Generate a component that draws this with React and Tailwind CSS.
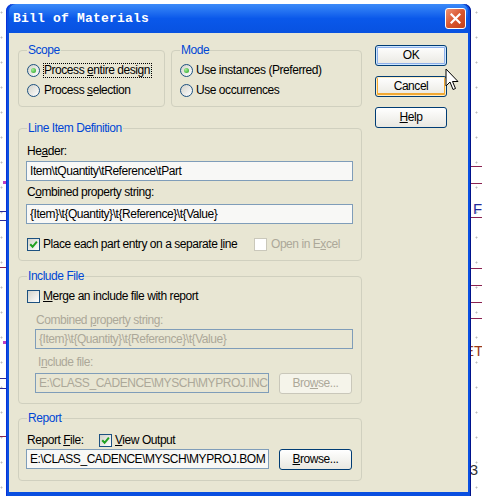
import React from "react";

function Radio({ checked }) {
  return (
    <span className="flex h-[13px] w-[13px] shrink-0 items-center justify-center rounded-full border border-[#1C5180] bg-gradient-to-br from-[#D2D2CA] to-white">
      {checked && (
        <span className="h-[5px] w-[5px] rounded-full bg-[radial-gradient(circle_at_35%_35%,#A4EE96,#1FA01F)]" />
      )}
    </span>
  );
}

function Check({ checked, disabled }) {
  return (
    <span
      className={`flex h-[13px] w-[13px] shrink-0 items-center justify-center border ${
        disabled
          ? "border-[#CAC8BB] bg-white"
          : "border-[#1C5180] bg-gradient-to-br from-[#D2D2CA] to-white"
      }`}
    >
      {checked && (
        <svg width="9" height="9" viewBox="0 0 9 9">
          <path d="M1.2 4.2 L3.6 6.8 L7.9 1.6" fill="none" stroke="#21A121" strokeWidth="2" />
        </svg>
      )}
    </span>
  );
}

function Button({ children, kind = "normal", className = "" }) {
  const styles = {
    normal: "border-[#003C74] bg-gradient-to-b from-white to-[#E9E8E1] text-black",
    focus:
      "border-[#003C74] bg-gradient-to-b from-white to-[#E9E8E1] text-black shadow-[inset_0_0_0_1px_#CEE7FF,inset_0_0_0_2px_#8FB0EA]",
    hover:
      "border-[#003C74] bg-gradient-to-b from-white to-[#E9E8E1] text-black shadow-[inset_0_0_0_1px_#FFEDC2,inset_0_-1px_0_2px_#F2A934]",
    disabled: "border-[#C9C7BA] bg-[#F5F4EA] text-[#ACA899]",
  };
  return (
    <button
      type="button"
      className={`flex h-[21px] items-center justify-center whitespace-nowrap rounded-[3px] border leading-[15px] ${styles[kind]} ${className}`}
    >
      {children}
    </button>
  );
}

function Field({ value, disabled, className = "" }) {
  return (
    <input
      readOnly
      value={value}
      className={`block h-[20px] border border-[#7F9DB9] pl-[3px] leading-[18px] tracking-[-0.45px] outline-none ${
        disabled ? "bg-[#E8E6D3] text-[#ACA899]" : "bg-[#F8F8F6] text-black"
      } ${className}`}
    />
  );
}

function Group({ title, className = "", children }) {
  return (
    <fieldset className={`rounded-[4px] border border-[#D0D0BF] px-[8px] ${className}`}>
      <legend className="px-[1px] leading-[14px] text-[#0046D5]">{title}</legend>
      {children}
    </fieldset>
  );
}

export default function App() {
  return (
    <div className="relative h-[499px] w-[482px] overflow-hidden whitespace-nowrap bg-white bg-[radial-gradient(circle,#BDBDBD_0.8px,transparent_1.2px)] bg-[length:25px_25px] bg-[position:-11px_0px] font-['Liberation_Sans',Arial,sans-serif] text-[12px] tracking-[-0.45px] text-black">
      {/* schematic behind the dialog */}
      <div className="absolute left-[468px] top-[166px] h-px w-[14px] bg-[#8A2250]" />
      <div className="absolute left-[468px] top-[183px] h-px w-[14px] bg-[#8A2250]" />
      <div className="absolute left-[468px] top-[217px] h-px w-[14px] bg-[#8A2250]" />
      <div className="absolute left-[468px] top-[268px] h-px w-[14px] bg-[#8A2250]" />
      <div className="absolute left-[468px] top-[285px] h-px w-[14px] bg-[#8A2250]" />
      <div className="absolute left-[468px] top-[302px] h-px w-[14px] bg-[#8A2250]" />
      <div className="absolute left-[468px] top-[318px] h-px w-[14px] bg-[#8A2250]" />
      <div className="absolute left-[473px] top-[201px] text-[15px] leading-[15px] tracking-normal text-[#1F2A9A]">F</div>
      <div className="absolute left-[464px] top-[343px] text-[15px] leading-[15px] tracking-normal text-[#9A3A1A]">ET</div>
      <div className="absolute left-[467px] top-[462px] text-[15px] leading-[15px] tracking-normal text-[#333]">'3</div>
      <div className="absolute left-0 top-[211px] h-px w-[8px] bg-[#2A2A9A]" />
      <div className="absolute left-0 top-[220px] h-px w-[8px] bg-[#2A2A9A]" />
      <div className="absolute left-0 top-[267px] h-px w-[8px] bg-[#8A2250]" />
      <div className="absolute left-0 top-[378px] h-px w-[8px] bg-[#2A2A9A]" />
      <div className="absolute left-0 top-[388px] h-px w-[8px] bg-[#2A2A9A]" />
      <div className="absolute left-0 top-[436px] h-px w-[8px] bg-[#8A2250]" />
      <div className="absolute left-[3px] top-[181px] h-[3px] w-[4px] bg-[#C040C0]" />
      <div className="absolute left-[3px] top-[341px] h-[3px] w-[4px] bg-[#C040C0]" />

      {/* dialog */}
      <div className="relative ml-[6px] mt-[4px] w-[465px] rounded-t-[7px] bg-[#0A4FE0] px-[3px] pb-[4px] shadow-[inset_-1px_0_0_#00138C,inset_1px_0_0_#0831D9]">
        <div className="flex h-[29px] items-center justify-between rounded-t-[7px] bg-gradient-to-b from-[#3B8AF8] via-[#0A58EA] to-[#0852E0] pl-[4px] pr-[2px]">
          <span className="font-['Liberation_Mono',monospace] text-[13px] font-bold tracking-[0.2px] text-white">
            Bill of Materials
          </span>
          <span className="flex h-[21px] w-[21px] items-center justify-center rounded-[3px] border border-white bg-gradient-to-br from-[#EE9274] via-[#D9562E] to-[#C2401A]">
            <svg width="11" height="11" viewBox="0 0 11 11">
              <path d="M1.5 1.5 L9.5 9.5 M9.5 1.5 L1.5 9.5" stroke="white" strokeWidth="2.2" strokeLinecap="square" />
            </svg>
          </span>
        </div>

        <div className="flex h-[459px] bg-[#E8E6D3]">
          {/* left column */}
          <div className="ml-[9px] w-[344px] pt-[10px]">
            <div className="flex gap-[6px]">
              <Group title="Scope" className="w-[147px] pb-[6px]">
                <div className="pt-[3px]">
                  <div className="flex h-[20px] items-center">
                    <Radio checked />
                    <span className="ml-[3px] border border-dotted border-black pr-[1px] leading-[13px]">
                      Process <span className="underline">e</span>ntire design
                    </span>
                  </div>
                  <div className="flex h-[20px] items-center">
                    <Radio />
                    <span className="ml-[4px]">
                      Process <span className="underline">s</span>election
                    </span>
                  </div>
                </div>
              </Group>
              <Group title="Mode" className="flex-1 pb-[6px]">
                <div className="pt-[3px]">
                  <div className="flex h-[20px] items-center">
                    <Radio checked />
                    <span className="ml-[3px]">Use instances (Preferred)</span>
                  </div>
                  <div className="flex h-[20px] items-center">
                    <Radio />
                    <span className="ml-[3px]">Use occurrences</span>
                  </div>
                </div>
              </Group>
            </div>

            <Group title="Line Item Definition" className="mt-[14px] pb-[8px]">
              <div className="pt-[9px] leading-[15px]">
                He<span className="underline">a</span>der:
              </div>
              <Field value="Item\tQuantity\tReference\tPart" className="-ml-px mt-[2px] w-[327px]" />
              <div className="mt-[4px] leading-[15px]">
                C<span className="underline">o</span>mbined property string:
              </div>
              <Field value="{Item}\t{Quantity}\t{Reference}\t{Value}" className="-ml-px mt-[4px] w-[327px]" />
              <div className="mt-[12px] flex h-[16px] items-center">
                <div className="flex w-[227px] items-center">
                  <Check checked />
                  <span className="ml-[3px]">
                    Place each part entry on a separate <span className="underline">l</span>ine
                  </span>
                </div>
                <Check disabled />
                <span className="ml-[4px] text-[#ACA899]">
                  Open in E<span className="underline">x</span>cel
                </span>
              </div>
            </Group>

            <Group title="Include File" className="mt-[8px] pb-[9px]">
              <div className="mt-[5px] flex h-[16px] items-center">
                <Check />
                <span className="ml-[3px]">
                  <span className="underline">M</span>erge an include file with report
                </span>
              </div>
              <div className="pl-[9px] text-[#ACA899]">
                <div className="mt-[9px] leading-[15px]">
                  Combined <span className="underline">p</span>roperty string:
                </div>
                <Field disabled value="{Item}\t{Quantity}\t{Reference}\t{Value}" className="-ml-px mt-[1px] w-[318px]" />
                <div className="mt-[6px] pl-[2px] leading-[15px]">
                  I<span className="underline">n</span>clude file:
                </div>
                <div className="-ml-px mt-[3px] flex gap-[10px]">
                  <Field disabled value="E:\CLASS_CADENCE\MYSCH\MYPROJ.INC" className="w-[234px]" />
                  <Button kind="disabled" className="h-[20px] w-[73px]">
                    Bro<span className="underline">w</span>se...
                  </Button>
                </div>
              </div>
            </Group>

            <Group title="Report" className="mt-[7px] pb-[10px]">
              <div className="mt-[7px] flex h-[16px] items-center">
                <span className="w-[72px]">
                  Report <span className="underline">F</span>ile:
                </span>
                <Check checked />
                <span className="ml-[3px]">
                  <span className="underline">V</span>iew Output
                </span>
              </div>
              <div className="-ml-px mt-[1px] flex gap-[10px]">
                <Field value="E:\CLASS_CADENCE\MYSCH\MYPROJ.BOM" className="w-[243px]" />
                <Button className="h-[20px] w-[73px]">
                  <span className="underline">B</span>rowse...
                </Button>
              </div>
            </Group>
          </div>

          {/* buttons */}
          <div className="ml-[13px] flex w-[72px] flex-col gap-[10px] pt-[12px]">
            <Button kind="focus">OK</Button>
            <Button kind="hover">Cancel</Button>
            <Button>
              <span className="underline">H</span>elp
            </Button>
          </div>
        </div>
      </div>

      {/* mouse pointer */}
      <svg className="absolute left-[445px] top-[68px]" width="14" height="24" viewBox="0 0 14 24">
        <path d="M1 1 L1 18 L5 14 L8 21.5 L10.5 20.5 L7.5 13.5 L13 13.5 Z" fill="white" stroke="black" strokeWidth="1" strokeLinejoin="round" />
      </svg>
    </div>
  );
}
